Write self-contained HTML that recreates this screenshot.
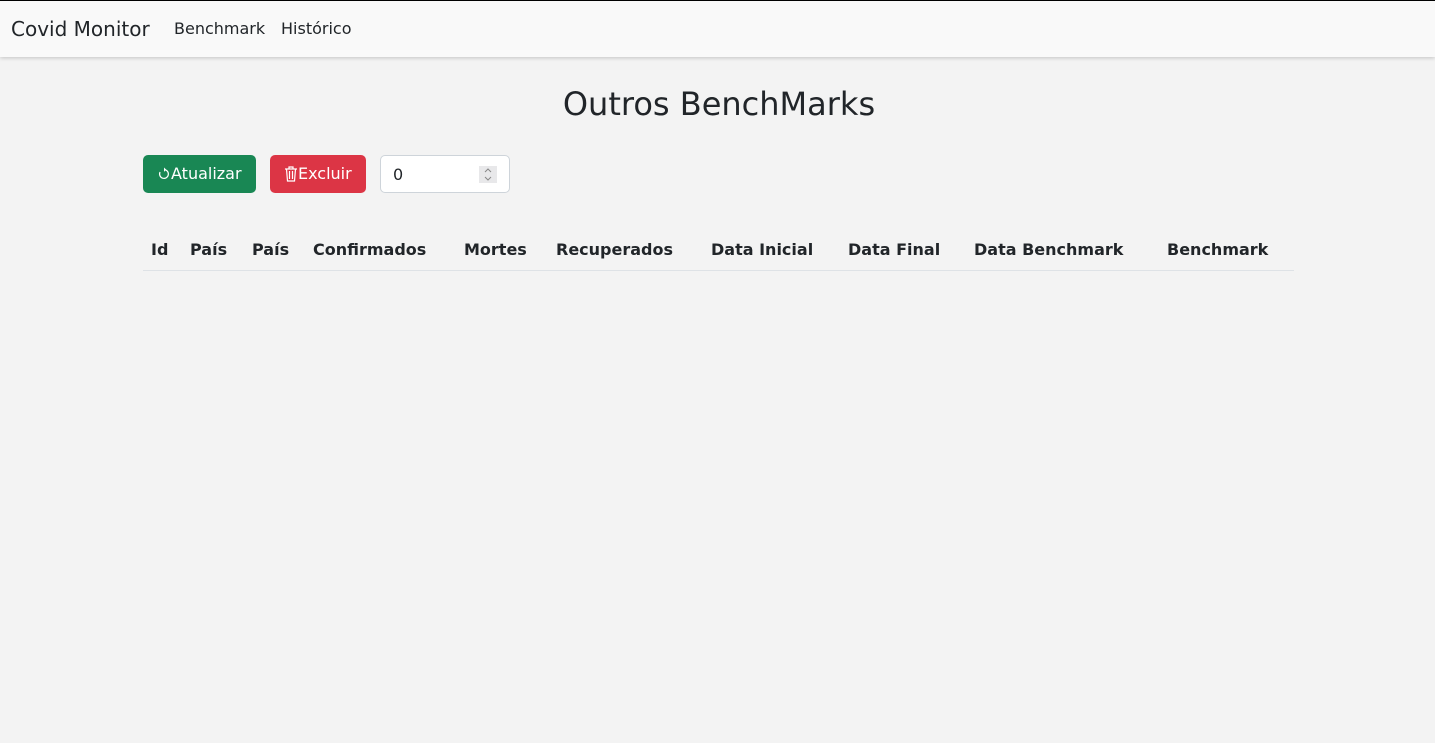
<!DOCTYPE html>
<html><head><meta charset="utf-8"><style>
body{margin:0;background:#f3f3f3;font-family:"DejaVu Sans","Liberation Sans",sans-serif;color:#212529;width:1435px;height:743px;overflow:hidden;position:relative}
.nav{position:absolute;top:0;left:0;width:1435px;height:56px;background:#f9f9f9;border-top:1px solid #000;box-shadow:0 1px 4px rgba(0,0,0,.2)}
.nav span{position:absolute;top:18px;white-space:nowrap}
h1{position:absolute;top:85px;left:0;width:1438px;text-align:center;margin:0;font-size:32px;font-weight:400}
.btn{position:absolute;top:155px;height:38px;border-radius:5px;color:#fff;font-size:16px;line-height:38px;box-sizing:border-box;padding-left:14px}
.inp{position:absolute;top:155px;left:380px;width:130px;height:38px;border:1px solid #ced4da;border-radius:5px;background:#fff;box-sizing:border-box}
.th{position:absolute;top:240px;font-size:16px;font-weight:bold;white-space:nowrap}
.line{position:absolute;left:143px;top:270px;width:1151px;height:1px;background:#dee2e6}
</style></head><body>
<div class="nav"><span style="left:11px;top:16px;font-size:20px">Covid Monitor</span><span style="left:174px;font-size:16px">Benchmark</span><span style="left:281px;font-size:16px">Histórico</span></div>
<h1>Outros BenchMarks</h1>
<div class="btn" style="left:143px;width:113px;background:#198754"><svg width="14" height="14" viewBox="0 0 16 16" style="vertical-align:-2px"><path d="M8 3a5 5 0 1 1-4.5 2.8" fill="none" stroke="#fff" stroke-width="1.4"/><path d="M8 0.5v5l2.5-2.5z" fill="#fff"/></svg>Atualizar</div>
<div class="btn" style="left:270px;width:96px;background:#dc3545"><svg width="14" height="16" viewBox="0 0 14 16" style="vertical-align:-3px"><path d="M1 3h12M5 3V1h4v2M2.5 3l1 12h7l1-12M5.5 5v8M8.5 5v8" fill="none" stroke="#fff" stroke-width="1.2"/></svg>Excluir</div>
<div class="inp"><span style="position:absolute;left:12px;top:9px;font-size:16px">0</span><svg style="position:absolute;left:98px;top:10px" width="18" height="17" viewBox="0 0 18 17"><rect width="18" height="17" fill="#e8e8ea"/><path d="M6 6l3-3 3 3M6 11l3 3 3-3" fill="none" stroke="#888" stroke-width="1"/></svg></div>
<span class="th" style="left:151px">Id</span>
<span class="th" style="left:190px">País</span>
<span class="th" style="left:252px">País</span>
<span class="th" style="left:313px">Confirmados</span>
<span class="th" style="left:464px">Mortes</span>
<span class="th" style="left:556px">Recuperados</span>
<span class="th" style="left:711px">Data Inicial</span>
<span class="th" style="left:848px">Data Final</span>
<span class="th" style="left:974px">Data Benchmark</span>
<span class="th" style="left:1167px">Benchmark</span>
<div class="line"></div>
</body></html>
